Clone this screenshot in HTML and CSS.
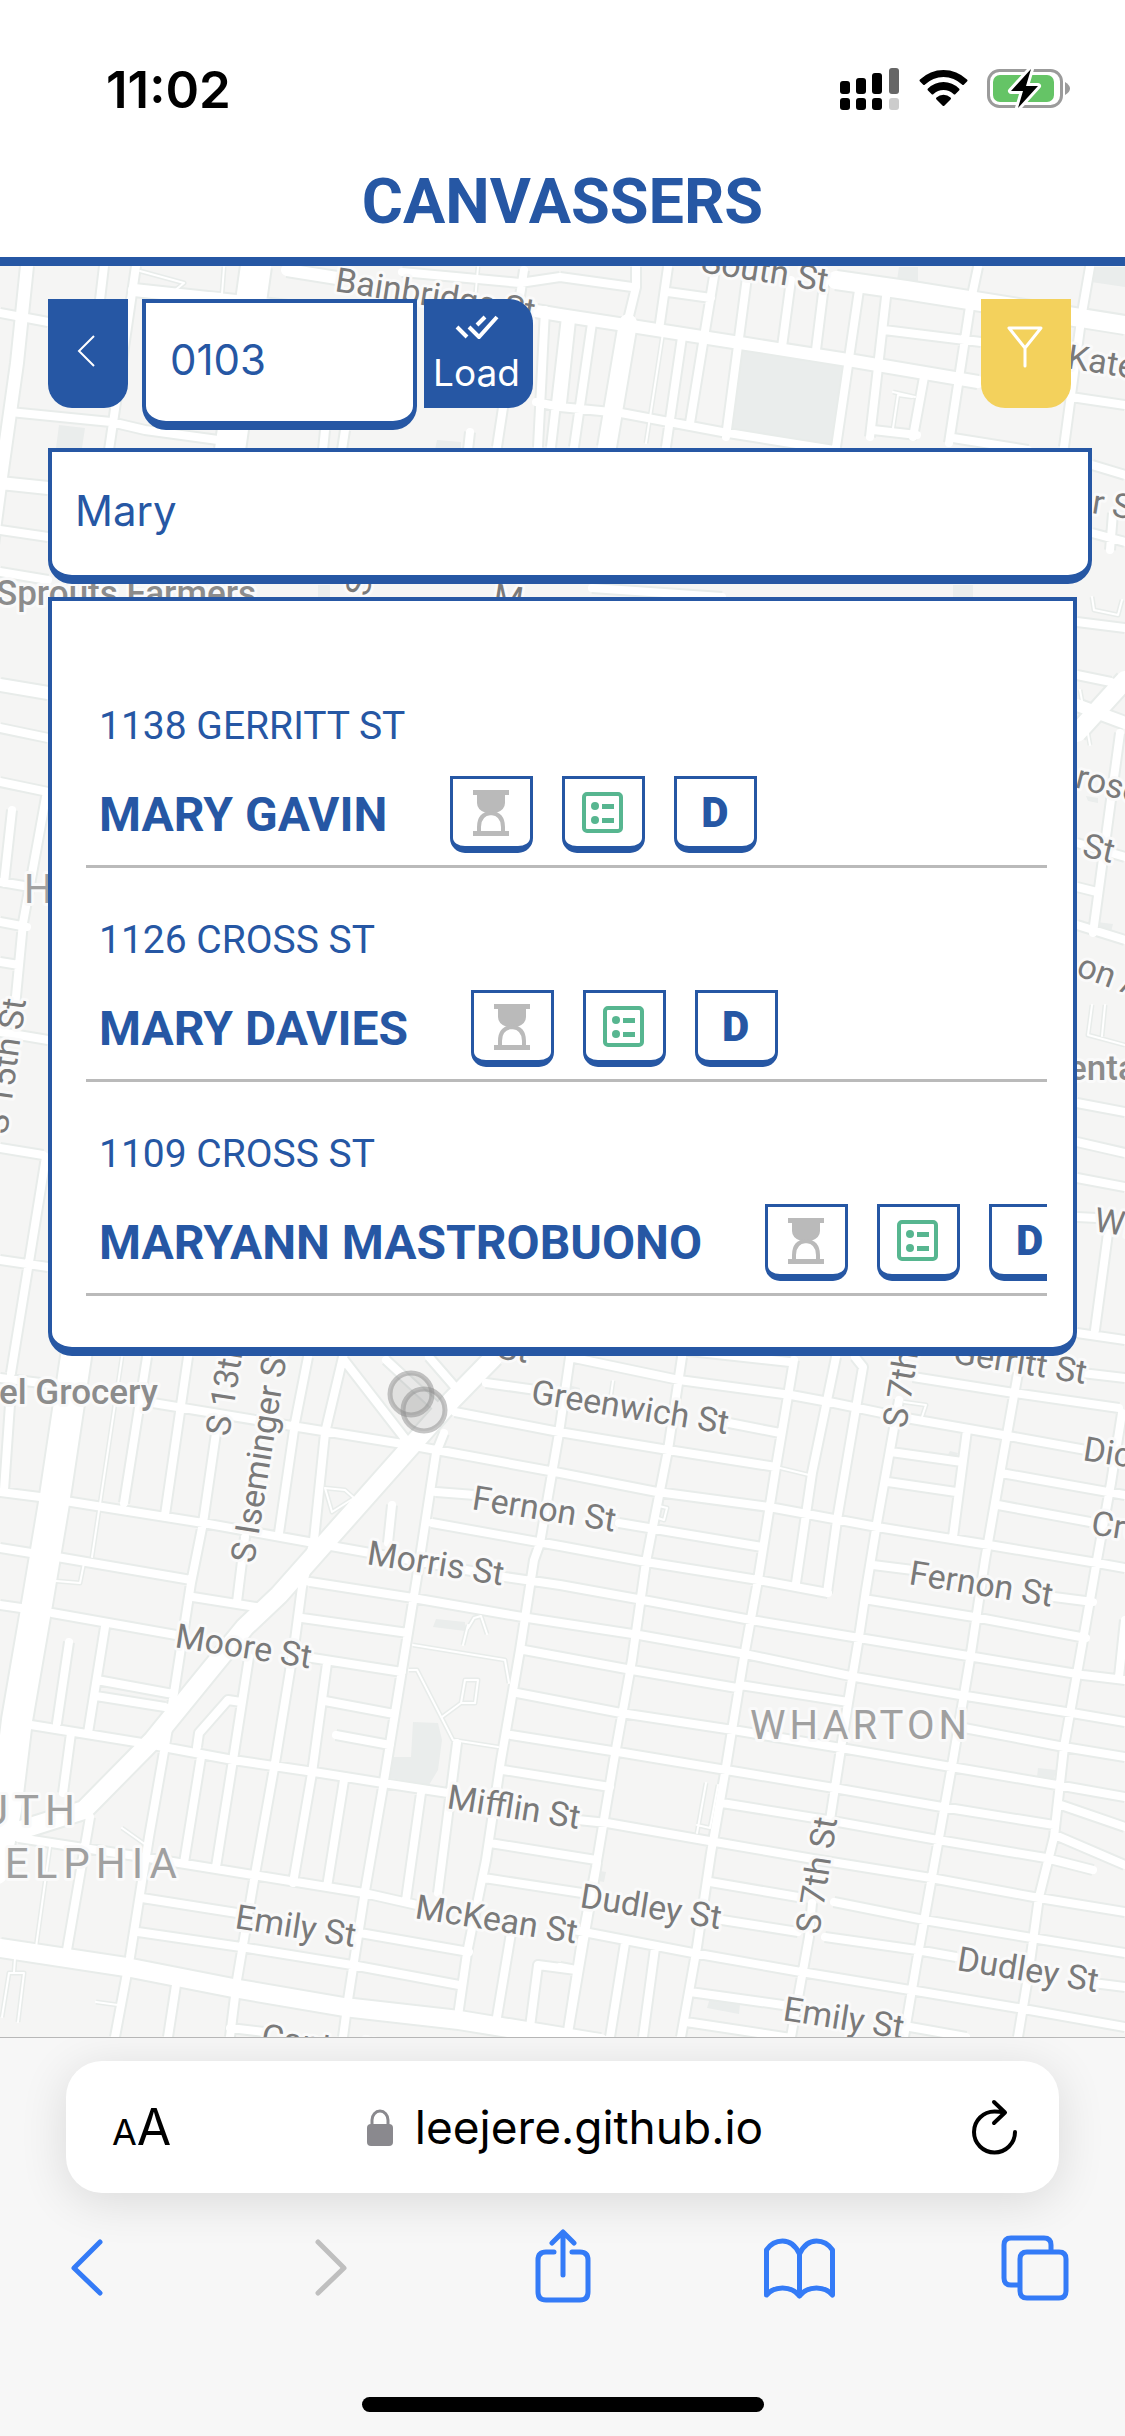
FILE: index.html
```html
<!DOCTYPE html>
<html lang="en">
<head>
<meta charset="utf-8">
<meta name="viewport" content="width=device-width, initial-scale=1">
<title>Canvassers</title>
<link rel="stylesheet" href="styles.css">
</head>
<body>
<header class="app-header">
  <div class="status-bar">
    <span class="clock">11:02</span>
    <span class="status-icons">
      <svg width="60" height="42" viewBox="0 0 60 42" role="img" aria-label="Signal">
        <g fill="#000"><rect y="13" width="10" height="13" rx="3"/><rect x="16" y="10" width="10" height="16" rx="3"/><rect x="32" y="5" width="10" height="21" rx="3"/><rect y="30" width="10" height="12" rx="3"/><rect x="16" y="30" width="10" height="12" rx="3"/><rect x="32" y="30" width="10" height="12" rx="3"/></g>
        <rect x="49" width="10" height="26" rx="3" fill="#666"/><rect x="49" y="30" width="10" height="12" rx="3" fill="#ccc"/>
      </svg>
      <svg width="51" height="42" viewBox="0 0 51 42" role="img" aria-label="Wi-Fi">
        <path d="M2 12.500a34 34 0 0 1 47 0q1 1 0 2l-3 3q-1 1-2 0a26.500 26.500 0 0 0-37 0q-1 1-2 0l-3-3q-1-1 0-2zM10 21.500a22 22 0 0 1 31 0q1 1 0 2l-3.500 3.500q-1 1-2 0a14.500 14.500 0 0 0-20 0q-1 1-2 0l-3.500-3.500q-1-1 0-2zM18.500 30.500a10.500 10.500 0 0 1 14 0q1 1 0 2l-6 6q-1 1-2 0l-6-6q-1-1 0-2z" transform="translate(0 -1)"/>
      </svg>
      <svg width="83" height="42" viewBox="0 0 83 42" role="img" aria-label="Battery charging">
        <rect x="1.500" y="2.500" width="73" height="36" rx="11" fill="none" stroke="#9b9b9b" stroke-width="3"/>
        <rect x="6" y="7" width="61" height="27" rx="7" fill="#65c466"/>
        <path d="M78 14q5 3 5 6.500t-5 6.500z" fill="#9b9b9b"/>
        <path d="M44 1L24 23h12l-5 17 20-22H39z" fill="#000" stroke="#fff" stroke-width="6" stroke-linejoin="round" paint-order="stroke"/>
      </svg>
    </span>
  </div>
  <h1 class="app-title">CANVASSERS</h1>
</header>

<main class="map">
  <svg class="map-canvas" viewBox="0 266 1125 1771" preserveAspectRatio="xMidYMin slice" aria-label="Street map">
    <defs>
      <path id="thin" d="M163 300L184 283 140 271M205 293L222 294 224 267M122 1357L92 1557M84 1563L80 1583 56 1581M50 1847L36 1947M146 1845L122 1828M413 1645L505 1660 509 1683M463 1645L468 1625M468 1628L474 1618 481 1616 487 1634M409 1670L417 1670 453 1740 498 1747M442 1717L461 1703 465 1680 478 1680 475 1703 461 1703M697 1833L706 1783M697 1825L710 1828 718 1785M325 1488L345 1490 354 1498 332 1512zM2 2017L9 1973 24 1973 18 2022M15 1958L14 1972M96 2002L118 2005M663 333L646 443M478 267L475 300M613 1381L611 1395M898 395L912 397M893 392L915 397M898 395L893 428M1080 690L1090 745M1092 1005L1088 1035 1125 1045M1105 1005L1102 1036M776 1467L809 1475M659 1506L667 1508 664 1520 658 1518M904 1402L926 1405 922 1417M1092 597L1094 610 1118 615 1122 600"/>
      <path id="local" d="M136 266L131 300 109 450M104 266L97 325M0 313L48 322M10 412L111 422 145 430 218 440M0 530L48 537M0 572L48 580M402 272L520 283 560 277M560 277L632 287M668 292L711 298M536 402L560 407 621 413 722 432 834 450M1071 397L1125 405M884 330L981 342M873 430L917 435M953 438L1028 450M636 267L636 287 628 320M668 267L659 330M715 270L704 337 690 423M747 277L726 437M791 280L782 347M825 277L816 350M859 290L836 447M886 297L870 437M978 267L971 300 949 443M924 377L913 437M1090 267L1082 313 1064 447M571 320L562 403M592 323L574 447M682 337L666 447M524 270L497 447M545 310L538 447M566 317L551 447M325 430L323 450M345 430L342 450M470 432L468 450M592 588L722 597M1092 465L1125 475M1092 533L1125 542M1113 513L1110 550M1077 622L1125 628M1077 675L1111 682M1077 843L1125 857M1077 887L1097 892M1077 925L1125 940M1120 733L1093 933M1077 1103L1125 1112M1077 1142L1125 1153M1077 1178L1125 1187M1077 1217L1097 1218M1108 1233L1095 1330M1077 1333L1125 1340M0 728L48 738M0 782L48 792M46 797L23 923 15 1007M12 810L4 883M0 882L24 886M0 922L27 927M0 962L19 965M0 1032L48 1040M0 1148L43 1155M0 1260L48 1267M46 1157L11 1373M0 1378L57 1385M11 1390L4 1490
      M0 1492L40 1497 203 1523 314 1543 505 1577 560 1585 643 1600 751 1620 859 1638 974 1657 1083 1675 1125 1680
      M153 1403L298 1427 409 1445 555 1472 657 1492 769 1507 877 1527 989 1545 1097 1563 1125 1568
      M455 1412L559 1432 668 1450 776 1467M574 1358L679 1380 791 1395 834 1403 906 1418 1003 1435 1086 1450M486 1383L536 1390M729 1423L780 1433M680 1350L790 1362M913 1377L1014 1393 1119 1408M1082 1373L1125 1378M891 1452L962 1462M888 1482L956 1492M1001 1473L1125 1495M998 1505L1090 1522M619 1523L762 1547M436 1492L475 1495M432 1523L560 1546 646 1562 758 1580 828 1593M873 1565L913 1570M1054 1597L1093 1602M870 1600L974 1617 1086 1638
      M310 1582L413 1598 528 1618 639 1635 740 1653 855 1677 960 1695 1072 1713 1125 1722M302 1618L408 1633M57 1557L191 1580M0 1548L31 1553M193 1597L256 1607M0 1605L21 1608M52 1613L176 1635M306 1657L402 1672M524 1650L632 1670 737 1688M740 1685L848 1702M517 1693L621 1713 733 1730 841 1748 951 1767 1057 1785 1125 1797M964 1728L1064 1747 1125 1757M511 1735L618 1752 726 1770 834 1788 942 1807 1054 1825M503 1770L610 1787M722 1803L827 1820 938 1840 1046 1858 1093 1870
      M31 1725L142 1743 233 1760 314 1772 383 1783 448 1793M578 1820L607 1823 715 1842 819 1860 931 1878 1039 1898 1125 1912M490 1843L596 1860M484 1878L582 1893M710 1882L798 1897M834 1902L924 1920 1032 1938 1125 1953M722 1920L798 1932M825 1937L917 1950 956 1957M19 1838L142 1857 253 1875 364 1893 417 1905M574 1930L589 1933 693 1953 801 1972 910 1990 1018 2008 1125 2027M142 1898L237 1913M360 1933L469 1952M138 1932L241 1947 352 1965 459 1985M690 1992L783 2005M686 2022L791 2038M910 2027L966 2037M1093 1983L1125 1987M230 2028L264 2032M530 2027L538 1965 576 1970M560 1967L576 1970M97 1680L173 1694M96 1696L165 1707
      M69 1642L57 1723M105 1627L88 1733M71 1733L63 1793M188 1357L165 1515M147 1357L124 1503M216 1433L203 1523 191 1583 174 1693 166 1740 149 1837 130 1957 115 2037M245 1537L237 1602M308 1357L295 1423 279 1533M343 1357L325 1433 314 1540 302 1587 295 1640 276 1757 254 1880 237 1980 230 2037M249 1657L233 1760 216 1867M327 1663L312 1773 293 1883M444 1433L436 1453 417 1577 402 1670 383 1787 364 1897 348 2000 343 2037M201 1757L184 1863M241 1702L228 1700 199 1733 197 1747M325 1701L394 1714M336 1735L390 1745M344 1780L327 1887M421 1793L406 1900M457 1743L438 1893M90 1817L67 1950M176 1985L168 2037M570 1357L559 1433 540 1543 534 1560 520 1650 501 1760 486 1860 467 1953 457 2023M511 1933L496 2023M597 1863L585 1933 568 2033M682 1357L668 1450 646 1562 632 1660 614 1760 596 1867 582 1940 567 2037M625 1943L610 2037M655 1948L643 2037M794 1360L776 1467 758 1580 744 1657 726 1767 711 1853 697 1947 681 2037M836 1357L812 1473 796 1583M855 1357L863 1367 837 1520 827 1593M899 1400L877 1523 866 1590 859 1637 848 1703 830 1820M812 1903L809 1937 791 2037M967 1430L953 1537M1018 1373L1003 1457 985 1560 971 1653 953 1760 935 1860 917 1960 904 2037M1122 1413L1111 1483 1097 1560 1083 1640 1064 1747 1054 1837 1039 1897 1028 1977 1018 2037M1125 1620L1119 1677M1061 1805L1125 1827M1055 1835L1125 1865M344 1360L406 1440M386 1360L440 1410M429 1357L455 1387M392 1505L388 1543"/>
      <path id="collector" d="M27 266L17 363 2 470-10 560M0 483L48 488M0 685L48 693M134 290L245 302 400 320M536 311L560 315 625 325 740 343 848 360 978 382M287 270L337 278M1077 705L1125 723"/>
      <path id="avenue" d="M628 323L607 447M836 280L906 290 1125 325M1077 733L1125 680M494 1357L452 1400 279 1595 245 1627 153 1740 84 1810 11 1833M0 1948L126 1967 233 1988 344 2007 459 2020 600 2043"/>
      <path id="boulevard" d="M256 266L230 450M77 1350L54 1503 36 1610 17 1720 6 1810-6 1870"/>
    </defs>
    <g class="parks">
      <path d="M742 348L845 363 832 447 729 430zM899 267h19v16l-21-3zM1093 267h32v20l-34-5zM413 1722L438 1723 442 1740 438 1770 429 1785 390 1778 393 1757 411 1757zM436 1619l29 3v9l-32-4zM59 425l26 3-3 20H56zM710 1998l30 6-1 10-32-6zM1038 1768l18 2-2 9-17-2zM437 440l24 2v8h-26zM318 585h12v12h-12zM953 585h20v12h-20zM1086 796l12 2v5l-10-2zM950 1451l8 2-2 5-9-2zM568 1385l12 3-1 8-12-3zM594 1870l12 2-2 10-12-2zM1097 922l16 2-2 8-15-2z"/>
    </g>
    <g class="casing"><use href="#thin" class="w-thin"/><use href="#local" class="w-local"/><use href="#collector" class="w-collector"/><use href="#avenue" class="w-avenue"/><use href="#boulevard" class="w-boulevard"/></g>
    <g class="road"><use href="#thin" class="w-thin"/><use href="#local" class="w-local"/><use href="#collector" class="w-collector"/><use href="#avenue" class="w-avenue"/><use href="#boulevard" class="w-boulevard"/></g>
    <g class="street-names">
      <text transform="translate(334 291) rotate(9)">Bainbridge St</text>
      <text transform="translate(700 272) rotate(9)">South St</text>
      <text transform="translate(1066 368) rotate(9)">Kater St</text>
      <text transform="translate(1091 513) rotate(9)">r St</text>
      <text transform="translate(369 597) rotate(-81)">S</text>
      <text transform="translate(492 607) rotate(9)">M</text>
      <text transform="translate(7 1135) rotate(-82)">S 15th St</text>
      <text transform="translate(1074 787) rotate(15)">rose</text>
      <text transform="translate(1081 856) rotate(13)">St</text>
      <text transform="translate(1075 975) rotate(20)">on Ave</text>
      <text transform="translate(1093 1231) rotate(9)">Wilder</text>
      <text transform="translate(952 1363) rotate(9)">Gerritt St</text>
      <text transform="translate(496 1358) rotate(9)">St</text>
      <text transform="translate(229 1437) rotate(-81)">S 13th St</text>
      <text transform="translate(254 1564) rotate(-81)">S Iseminger St</text>
      <text transform="translate(530 1403) rotate(9)">Greenwich St</text>
      <text transform="translate(906 1429) rotate(-81)">S 7th St</text>
      <text transform="translate(1082 1460) rotate(9)">Dickinson</text>
      <text transform="translate(1090 1534) rotate(9)">Cross St</text>
      <text transform="translate(471 1509) rotate(9)">Fernon St</text>
      <text transform="translate(366 1564) rotate(9)">Morris St</text>
      <text transform="translate(908 1584) rotate(9)">Fernon St</text>
      <text transform="translate(174 1647) rotate(9)">Moore St</text>
      <text transform="translate(446 1808) rotate(9)">Mifflin St</text>
      <text transform="translate(234 1928) rotate(9)">Emily St</text>
      <text transform="translate(414 1918) rotate(9)">McKean St</text>
      <text transform="translate(579 1907) rotate(9)">Dudley St</text>
      <text transform="translate(819 1935) rotate(-81)">S 7th St</text>
      <text transform="translate(956 1970) rotate(9)">Dudley St</text>
      <text transform="translate(782 2020) rotate(9)">Emily St</text>
      <text transform="translate(260 2047) rotate(9)">Cantrell St</text>
    </g>
    <g class="poi-names">
      <text x="-4" y="605">Sprouts Farmers</text>
      <text x="-1" y="1404">el Grocery</text>
      <text x="1068" y="1080">ental</text>
    </g>
    <g class="area-names">
      <text x="24" y="903">H</text>
      <text x="750" y="1739">WHARTON</text>
      <g class="district">
        <text x="81" y="1825" text-anchor="end">SOUTH</text>
        <text x="183" y="1878" text-anchor="end">PHILADELPHIA</text>
      </g>
    </g>
    <g class="markers"><circle cx="411" cy="1394" r="21"/><circle cx="424" cy="1410" r="21"/></g>
  </svg>

  <div class="overlay">
    <form class="toolbar">
      <button class="tool back" type="button" aria-label="Back">
        <svg width="18" height="32" viewBox="0 0 18 32" fill="none" stroke="#fff" stroke-width="2"><path d="M17 1L2 16 17 31"/></svg>
      </button>
      <input class="field precinct" type="text" value="0103" aria-label="Precinct">
      <button class="tool load" type="button">
        <svg width="44" height="24" viewBox="0 0 44 24" fill="none" stroke="#fff" stroke-width="4"><path d="M2 12l10 10M14 12l10 10L42 2M22 10L30 2"/></svg>
        <span>Load</span>
      </button>
      <button class="tool filter" type="button" aria-label="Filter">
        <svg width="36" height="42" viewBox="0 0 36 42" fill="none" stroke="#fff" stroke-width="3" stroke-linecap="round" stroke-linejoin="round"><path d="M2 2h32L18 22zM18 22v18"/></svg>
      </button>
    </form>
    <input class="field search" type="text" value="Mary" aria-label="Search voters">
    <ul class="results">
      <li class="voter">
        <p class="address">1138 GERRITT ST</p>
        <div class="voter-row">
          <strong class="name">MARY GAVIN</strong>
          <button class="chip" type="button" aria-label="Pending"><svg width="36" height="46" viewBox="0 0 36 46"><use href="#hourglass"/></svg></button>
          <button class="chip" type="button" aria-label="Ballot"><svg width="41" height="41" viewBox="0 0 41 41"><use href="#ballot"/></svg></button>
          <button class="chip" type="button">D</button>
        </div>
      </li>
      <li class="voter">
        <p class="address">1126 CROSS ST</p>
        <div class="voter-row">
          <strong class="name">MARY DAVIES</strong>
          <button class="chip" type="button" aria-label="Pending"><svg width="36" height="46" viewBox="0 0 36 46"><use href="#hourglass"/></svg></button>
          <button class="chip" type="button" aria-label="Ballot"><svg width="41" height="41" viewBox="0 0 41 41"><use href="#ballot"/></svg></button>
          <button class="chip" type="button">D</button>
        </div>
      </li>
      <li class="voter">
        <p class="address">1109 CROSS ST</p>
        <div class="voter-row">
          <strong class="name">MARYANN MASTROBUONO</strong>
          <button class="chip" type="button" aria-label="Pending"><svg width="36" height="46" viewBox="0 0 36 46"><use href="#hourglass"/></svg></button>
          <button class="chip" type="button" aria-label="Ballot"><svg width="41" height="41" viewBox="0 0 41 41"><use href="#ballot"/></svg></button>
          <button class="chip" type="button">D</button>
        </div>
      </li>
    </ul>
  </div>
</main>

<footer class="browser-bar">
  <div class="url-box">
    <button class="plain text-size" type="button" aria-label="Text size"><span class="small-a">A</span><span class="large-a">A</span></button>
    <a class="url" href="#">
      <svg width="26" height="37" viewBox="0 0 26 37"><path d="M5 18V11a8 9 0 0 1 16 0v7" fill="none" stroke="#8a898e" stroke-width="3"/><rect y="15" width="26" height="22" rx="4" fill="#8a898e"/></svg>
      <span>leejere.github.io</span>
    </a>
    <button class="plain reload" type="button" aria-label="Reload">
      <svg width="46" height="56" viewBox="0 0 46 56" fill="none" stroke="#000" stroke-width="4" stroke-linecap="round" stroke-linejoin="round"><path d="M43 33A20.500 20.500 0 1 1 22.500 12.500q5 0 10 1M22 3l11 10.500L22 24"/></svg>
    </button>
  </div>
  <nav class="nav-row" aria-label="Browser">
    <button class="plain" type="button" aria-label="Go back"><svg width="80" height="80" viewBox="47 2226 80 80"><path d="M100 2242L74 2268 100 2293"/></svg></button>
    <button class="plain" type="button" aria-label="Go forward" disabled><svg width="80" height="80" viewBox="284 2226 80 80"><path d="M317 2242L343 2268 317 2293"/></svg></button>
    <button class="plain" type="button" aria-label="Share"><svg width="80" height="80" viewBox="522 2226 80 80"><path d="M553 2252h-8q-8 0-8 8v32q0 8 8 8h34q8 0 8-8v-32q0-8-8-8h-8M562 2275v-42M551 2243l11-11 11 11"/></svg></button>
    <button class="plain" type="button" aria-label="Bookmarks"><svg width="80" height="80" viewBox="759 2226 80 80"><path d="M798.500 2254v42M798.500 2254q-6-13-17-13-10 0-16 9v45q6-7 16-7 11 0 17 8 6-8 17-8 10 0 16 7v-45q-6-9-16-9-11 0-17 13z"/></svg></button>
    <button class="plain" type="button" aria-label="Tabs"><svg width="80" height="80" viewBox="998 2226 80 80"><path d="M1051 2250v-5q0-7-7-7h-33q-7 0-7 7v33q0 7 7 7h7M1027 2252h32q7 0 7 7v32q0 7-7 7h-32q-7 0-7-7v-32q0-7 7-7z"/></svg></button>
  </nav>
  <div class="home-indicator"></div>
</footer>

<svg class="symbols" aria-hidden="true">
  <defs>
    <g id="hourglass">
      <path fill="#bababa" d="M0 0h36v5h-4v8q0 7-9 10Q18 26 13 23 4 20 4 13V5H0z"/>
      <path fill="none" stroke="#bababa" stroke-width="4" d="M6 42V37q0-13 12-14 12 1 12 14v5"/>
      <path fill="#bababa" d="M0 41h36v5H0z"/>
    </g>
    <g id="ballot">
      <rect x="2" y="2" width="37" height="37" rx="3" fill="none" stroke="#57b690" stroke-width="4"/>
      <g fill="#57b690"><circle cx="13" cy="14" r="4"/><circle cx="13" cy="28" r="4"/><path d="M20 12h12v5H20zM20 26h12v5H20z"/></g>
    </g>
  </defs>
</svg>
</body>
</html>
```
FILE: styles.css
```css
:root {
  --blue: #2657a4;
  --ios-blue: #347bf7;
}

* {
  box-sizing: border-box;
}

body {
  margin: 0;
  min-height: 100vh;
  display: flex;
  flex-direction: column;
  background: #fff;
  font-family: Inter, "Liberation Sans", sans-serif;
}

button,
input {
  margin: 0;
  font-family: inherit;
}

/* Header */
.app-header {
  border-bottom: 9px solid var(--blue);
  padding: 59px 0 15px;
}

.status-bar {
  display: flex;
  align-items: center;
  justify-content: space-between;
  height: 60px;
  padding: 0 55px 0 106px;
}

.clock {
  font-size: 51px;
  font-weight: 600;
}

.status-icons {
  display: flex;
  align-items: center;
  gap: 18px;
}

.app-title {
  margin: 43px 0 0;
  color: var(--blue);
  font: bold 63px/80px Roboto, sans-serif;
  text-align: center;
}

/* Map */
.map {
  position: relative;
  flex: 1;
  overflow: hidden;
  padding-bottom: 48px;
  background: #f5f5f4;
}

.map-canvas {
  position: absolute;
  inset: 0;
  width: 100%;
  height: 100%;
}

.parks {
  fill: #eaedec;
}

.casing,
.road {
  fill: none;
  stroke-linejoin: round;
}

.casing { stroke: #e8ecea; }
.road { stroke: #fff; stroke-linecap: round; }

.road .w-thin { stroke-width: 2px; }
.road .w-local { stroke-width: 8px; }
.road .w-collector { stroke-width: 12px; }
.road .w-avenue { stroke-width: 18px; }
.road .w-boulevard { stroke-width: 30px; }
.casing .w-thin { stroke-width: 5px; }
.casing .w-local { stroke-width: 12px; }
.casing .w-collector { stroke-width: 16px; }
.casing .w-avenue { stroke-width: 22px; }
.casing .w-boulevard { stroke-width: 34px; }

.street-names,
.poi-names,
.area-names {
  font-family: Roboto, sans-serif;
  font-size: 34px;
  stroke: #fafafa;
  stroke-width: 6px;
  stroke-linejoin: round;
  paint-order: stroke;
}

.street-names { fill: #7a7a7a; }
.poi-names { fill: #8c8c8c; font-size: 35px; font-weight: 500; }
.area-names { fill: #a0a0a0; font-size: 40px; letter-spacing: 4px; }
.district { font-size: 42px; letter-spacing: 6px; }

.markers {
  fill: rgba(140, 140, 140, 0.2);
  stroke: rgba(140, 140, 140, 0.5);
  stroke-width: 5px;
}

/* Controls over the map */
.overlay {
  position: relative;
  padding: 33px 33px 0 48px;
}

.toolbar {
  display: flex;
  align-items: flex-start;
}

.tool {
  display: flex;
  flex-direction: column;
  align-items: center;
  justify-content: center;
  height: 109px;
  padding: 0;
  border: 0;
  border-radius: 0 0 24px 24px;
  background: var(--blue);
  color: #fff;
}

.back {
  width: 80px;
  margin-right: 14px;
  padding: 0 4px 6px 0;
}

.load {
  width: 109px;
  margin-left: 7px;
  padding: 4px 4px 0 0;
  gap: 11px;
  border-radius: 0 24px 24px 0;
  font-size: 37px;
  line-height: 46px;
}

.filter {
  width: 90px;
  margin: 0 21px 0 auto;
  padding: 0 2px 14px 0;
  background: #f3d15c;
}

.field {
  display: block;
  border: 4px solid var(--blue);
  border-bottom-width: 9px;
  border-radius: 0 0 24px 24px;
  background: #fff;
  color: var(--blue);
  font-size: 42px;
  outline: 0;
}

.precinct {
  width: 275px;
  height: 131px;
  padding: 0 24px 6px;
}

.search {
  width: 100%;
  height: 136px;
  margin-top: 18px;
  padding: 0 23px 6px;
}

.results {
  margin: 13px 15px 0 0;
  padding: 53px 26px 51px 34px;
  border: 4px solid var(--blue);
  border-bottom-width: 9px;
  border-radius: 0 0 24px 24px;
  background: #fff;
  color: var(--blue);
  list-style: none;
}

.voter {
  overflow: hidden;
  padding: 49px 0 12px 13px;
  border-bottom: 3px solid #bababa;
  font-family: Roboto, sans-serif;
  white-space: nowrap;
}

.address {
  margin: 0 0 27px;
  font-size: 39px;
  line-height: 46px;
}

.voter-row {
  display: flex;
  align-items: center;
  gap: 29px;
}

.name {
  margin-right: 34px;
  font-size: 48px;
  line-height: 56px;
}

.chip {
  display: flex;
  flex: none;
  align-items: center;
  justify-content: center;
  width: 83px;
  height: 77px;
  padding: 0 2px 0 0;
  border: 3px solid var(--blue);
  border-bottom-width: 7px;
  border-radius: 0 0 15px 15px;
  background: #fff;
  color: var(--blue);
  font: 900 42px/46px Roboto, sans-serif;
}

/* Browser bar */
.browser-bar {
  display: flex;
  flex-direction: column;
  padding: 23px 0 24px;
  border-top: 1px solid #b8b8b8;
  background: #f7f7f7;
}

.url-box {
  display: grid;
  grid-template-columns: 1fr auto 1fr;
  align-items: center;
  height: 132px;
  margin: 0 66px;
  padding: 0 41px 0 46px;
  border-radius: 36px;
  background: #fff;
  box-shadow: 0 8px 48px rgba(0, 0, 0, 0.12);
}

.plain {
  display: flex;
  padding: 0;
  border: 0;
  background: none;
  color: #000;
}

.text-size {
  align-items: baseline;
}

.small-a { font-size: 36px; }
.large-a { font-size: 50px; }

.url {
  display: flex;
  align-items: center;
  gap: 22px;
  color: #000;
  font-size: 46px;
  text-decoration: none;
}

.reload {
  justify-self: end;
}

.nav-row {
  display: flex;
  justify-content: space-between;
  margin-top: 33px;
  padding: 0 47px;
}

.nav-row svg {
  fill: none;
  stroke: var(--ios-blue);
  stroke-width: 5px;
  stroke-linecap: round;
  stroke-linejoin: round;
}

.nav-row :disabled svg {
  stroke: #bfbfbf;
}

.home-indicator {
  width: 402px;
  height: 15px;
  margin: 91px auto 0;
  border-radius: 8px;
  background: #000;
}

.symbols {
  position: absolute;
  width: 0;
  height: 0;
}
```
